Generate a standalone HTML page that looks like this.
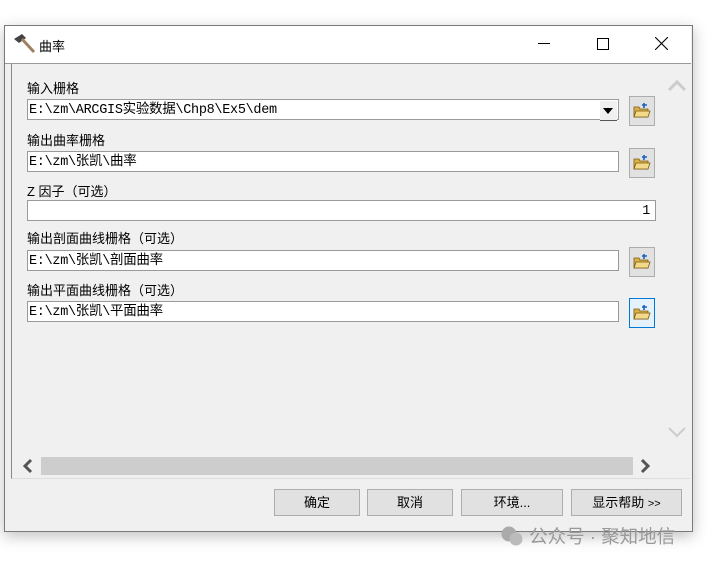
<!DOCTYPE html>
<html><head><meta charset="utf-8"><style>
body{margin:0;width:709px;height:563px;background:#fff;position:relative;overflow:hidden;font-family:"Liberation Sans","Noto Sans CJK SC",sans-serif;}
.a{position:absolute;}
.win{left:4px;top:25px;width:687px;height:505px;border:1px solid #7a7a7a;background:#f0f0f0;box-shadow:0 4px 14px rgba(0,0,0,.25);}
.title{left:5px;top:26px;width:686px;height:37px;background:#fff;border-bottom:1px solid #999;}
.panel{left:11px;top:64px;width:678px;height:414px;border-left:1px solid #888;border-bottom:1px solid #ddd;background:#f0f0f0;}
.lbl{font-size:13px;color:#000;left:27px;}
.fld{background:#fff;border:1px solid #9a9a9a;height:21px;font-family:"Liberation Mono","Noto Sans CJK SC",monospace;font-size:13.5px;letter-spacing:-0.3px;line-height:21px;padding-left:1px;box-sizing:border-box;}
.br{width:26px;height:30px;border:1px solid #adadad;background:#e1e1e1;box-sizing:border-box;}
.btn{top:489px;height:27px;border:1px solid #adadad;background:#e1e1e1;box-sizing:border-box;text-align:center;font-size:13px;line-height:25px;}
</style></head><body>
<div class="a win"></div>
<div class="a title"></div>
<svg class="a" style="left:13px;top:33px" width="24" height="22" viewBox="0 0 24 22"><path d="M1 6 L9 1 L13 5 L6 10 Z" fill="#444"/><path d="M9 6 L21 19" stroke="#a08060" stroke-width="3"/></svg>
<div class="a" style="left:39px;top:36px;font-size:13px">曲率</div>
<div class="a" style="left:538px;top:43px;width:12px;height:1px;background:#000"></div>
<div class="a" style="left:597px;top:38px;width:10px;height:10px;border:1px solid #000"></div>
<svg class="a" style="left:655px;top:37px" width="13" height="13"><path d="M0 0L13 13M13 0L0 13" stroke="#000" stroke-width="1.1"/></svg>
<div class="a panel"></div>
<div class="a" style="left:666px;top:66px;width:24px;height:392px;background:#f0f0f0"></div>
<svg class="a" style="left:667px;top:78px" width="20" height="14"><path d="M2 12L10 4L18 12" stroke="#ccc" stroke-width="3" fill="none"/></svg>
<svg class="a" style="left:667px;top:426px" width="20" height="14"><path d="M2 2L10 10L18 2" stroke="#ccc" stroke-width="2" fill="none"/></svg>
<div class="a" style="left:41px;top:457px;width:592px;height:18px;background:#cdcdcd"></div>
<svg class="a" style="left:21px;top:458px" width="14" height="16"><path d="M10 2L4 8L10 14" stroke="#555" stroke-width="3" fill="none"/></svg>
<svg class="a" style="left:638px;top:458px" width="14" height="16"><path d="M4 2L10 8L4 14" stroke="#555" stroke-width="3" fill="none"/></svg>

<div class="a lbl" style="top:78px">输入栅格</div>
<div class="a fld" style="left:27px;top:99px;width:592px">E:\zm\ARCGIS实验数据\Chp8\Ex5\dem</div>
<div class="a" style="left:600px;top:101px;width:17px;height:19px;background:#f0f0f0;border-bottom:1px solid #555"></div>
<svg class="a" style="left:602px;top:107px" width="12" height="8"><path d="M1 1H11L6 7Z" fill="#000"/></svg>
<div class="a lbl" style="top:130px">输出曲率栅格</div>
<div class="a fld" style="left:27px;top:151px;width:592px">E:\zm\张凯\曲率</div>
<div class="a lbl" style="top:181px">Z 因子（可选）</div>
<div class="a fld" style="left:27px;top:200px;width:629px;text-align:right;padding-right:5px">1</div>
<div class="a lbl" style="top:228px">输出剖面曲线栅格（可选）</div>
<div class="a fld" style="left:27px;top:250px;width:592px">E:\zm\张凯\剖面曲率</div>
<div class="a lbl" style="top:280px">输出平面曲线栅格（可选）</div>
<div class="a fld" style="left:27px;top:301px;width:592px">E:\zm\张凯\平面曲率</div>

<div class="a br" style="left:629px;top:96px"></div>
<div class="a br" style="left:629px;top:148px"></div>
<div class="a br" style="left:629px;top:247px"></div>
<div class="a br" style="left:629px;top:298px;border-color:#0078d7;background:#e5f1fb"></div>
<svg width="0" height="0" style="position:absolute"><defs><g id="fo"><path d="M1 5H6L7 7H15V15H1Z" fill="#d9b04a" stroke="#7a5a10" stroke-width=".8"/><path d="M3 9H17L15 15H1Z" fill="#f3d98a" stroke="#7a5a10" stroke-width=".8"/><path d="M11 1V6M9 3H14" stroke="#1a60c0" stroke-width="1.6"/></g></defs></svg>
<svg class="a" style="left:633px;top:102px" width="18" height="17"><use href="#fo"/></svg>
<svg class="a" style="left:633px;top:154px" width="18" height="17"><use href="#fo"/></svg>
<svg class="a" style="left:633px;top:253px" width="18" height="17"><use href="#fo"/></svg>
<svg class="a" style="left:633px;top:304px" width="18" height="17"><use href="#fo"/></svg>

<div class="a btn" style="left:274px;width:86px">确定</div>
<div class="a btn" style="left:367px;width:86px">取消</div>
<div class="a btn" style="left:461px;width:102px">环境...</div>
<div class="a btn" style="left:571px;width:111px">显示帮助 <span style="font-size:11px">&gt;&gt;</span></div>

<div class="a" style="left:500px;top:523px;font-size:18.5px;color:#999;white-space:nowrap">
<svg width="24" height="22" style="vertical-align:-4px"><circle cx="9" cy="9" r="7.5" fill="#aaa"/><circle cx="16" cy="14" r="6.5" fill="#bbb"/></svg> 公众号 · 聚知地信</div>
</body></html>
